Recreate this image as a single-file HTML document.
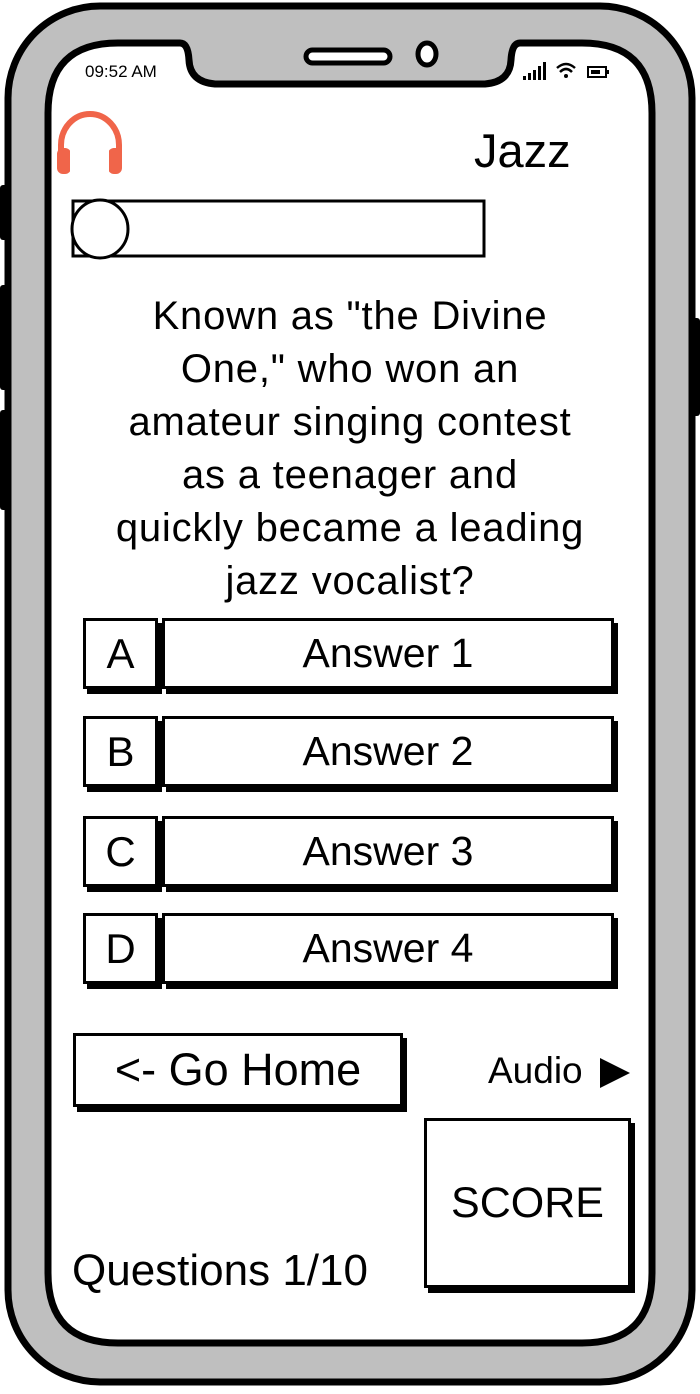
<!DOCTYPE html>
<html><head><meta charset="utf-8"><style>
body{margin:0;width:700px;height:1394px;background:#fff;position:relative;overflow:hidden;font-family:"Comic Sans MS","Liberation Sans",sans-serif;color:#000}
.a{position:absolute}
.box{position:absolute;border:3px solid #000;background:#fff;box-shadow:4px 5px 0 #000;box-sizing:border-box;display:flex;align-items:center;justify-content:center}
.q{position:absolute;left:40px;width:620px;top:290px;text-align:center;font-size:40px;line-height:53px;letter-spacing:0.8px}
</style></head><body>
<svg class="a" style="left:0;top:0" width="700" height="1394">
 <rect x="0" y="185" width="12" height="55" rx="3" fill="#000"/>
 <rect x="0" y="285" width="12" height="105" rx="3" fill="#000"/>
 <rect x="0" y="410" width="12" height="100" rx="3" fill="#000"/>
 <rect x="686" y="318" width="14" height="98" rx="3" fill="#000"/>
 <rect x="8" y="6" width="684" height="1376" rx="92" fill="#bfbfbf" stroke="#000" stroke-width="7"/>
 <path d="M118 43 H180 Q188 43 189 60 Q190 82 215 84 H485 Q510 82 511 60 Q512 43 520 43 H582 Q652 43 652 113 V1273 Q652 1343 582 1343 H118 Q48 1343 48 1273 V113 Q48 43 118 43 Z" fill="#fff" stroke="#000" stroke-width="7"/>
 <rect x="306" y="50" width="84" height="13" rx="6.5" fill="#fff" stroke="#000" stroke-width="5"/>
 <ellipse cx="427" cy="54" rx="9" ry="11" fill="#fff" stroke="#000" stroke-width="5"/>
 <g fill="#000"><rect x="523" y="76" width="3" height="4"/><rect x="528" y="73" width="3" height="7"/><rect x="533" y="70" width="3" height="10"/><rect x="538" y="66" width="3" height="14"/><rect x="543" y="62" width="3" height="18"/></g>
 <path d="M557 68 Q566 60 575 68 M560 72 Q566 66 572 72" stroke="#000" stroke-width="2.5" fill="none"/><circle cx="566" cy="76" r="2"/>
 <rect x="588" y="67" width="18" height="10" fill="none" stroke="#000" stroke-width="2"/><rect x="591" y="70" width="9" height="4"/><rect x="607" y="70" width="2" height="4"/>
 <path d="M61 160 V145 A29 31 0 0 1 119 145 V160" stroke="#f0654a" stroke-width="6" fill="none"/>
 <rect x="57" y="148" width="14" height="26" rx="6" fill="#f0654a"/><rect x="108" y="148" width="14" height="26" rx="6" fill="#f0654a"/>
 <rect x="70" y="147" width="4" height="28" fill="#fff"/><rect x="105" y="147" width="4" height="28" fill="#fff"/>
 <rect x="73" y="201" width="411" height="55" fill="#fff" stroke="#000" stroke-width="3"/>
 <ellipse cx="100" cy="229" rx="28" ry="29" fill="#fff" stroke="#000" stroke-width="3"/>
 <path d="M600 1058 L630 1073 L600 1088 Z" fill="#000"/>
</svg>
<div class="a" style="left:85px;top:62px;font-size:17px">09:52 AM</div>
<div class="a" style="left:474px;top:123px;font-size:47px">Jazz</div>
<div class="q">Known as "the Divine<br>One," who won an<br>amateur singing contest<br>as a teenager and<br>quickly became a leading<br>jazz vocalist?</div>
<div class="box" style="left:83px;top:618px;width:75px;height:71px;font-size:42px">A</div>
<div class="box" style="left:162px;top:618px;width:452px;height:71px;font-size:41px">Answer 1</div>
<div class="box" style="left:83px;top:716px;width:75px;height:71px;font-size:42px">B</div>
<div class="box" style="left:162px;top:716px;width:452px;height:71px;font-size:41px">Answer 2</div>
<div class="box" style="left:83px;top:816px;width:75px;height:71px;font-size:42px">C</div>
<div class="box" style="left:162px;top:816px;width:452px;height:71px;font-size:41px">Answer 3</div>
<div class="box" style="left:83px;top:913px;width:75px;height:71px;font-size:42px">D</div>
<div class="box" style="left:162px;top:913px;width:452px;height:71px;font-size:41px">Answer 4</div>
<div class="box" style="left:73px;top:1033px;width:330px;height:74px;font-size:45px">&lt;- Go Home</div>
<div class="a" style="left:488px;top:1050px;font-size:37px">Audio</div>
<div class="box" style="left:424px;top:1118px;width:207px;height:170px;font-size:43px">SCORE</div>
<div class="a" style="left:72px;top:1246px;font-size:44px">Questions 1/10</div>
</body></html>
